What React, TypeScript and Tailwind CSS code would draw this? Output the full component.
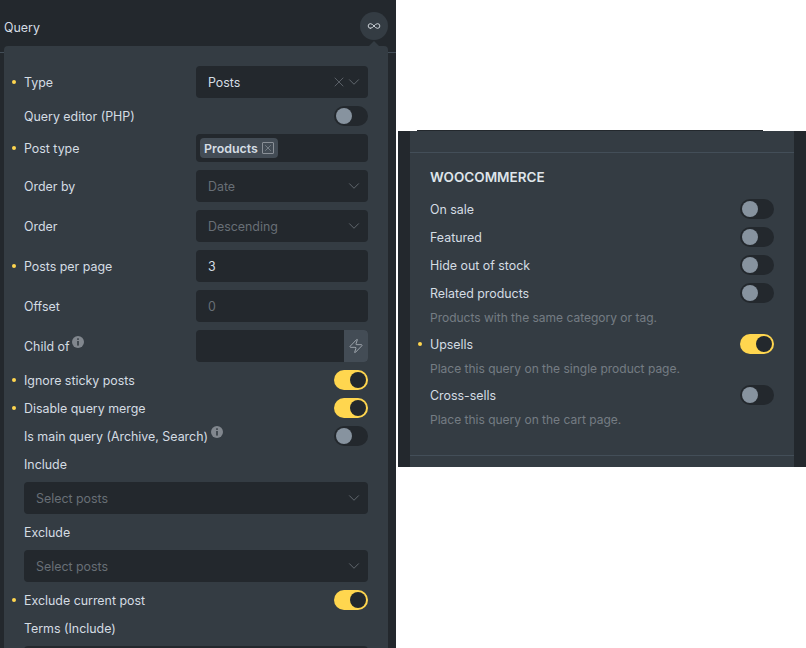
import React from 'react';
import { ChevronDown, Infinity as InfinityIcon, X, Zap } from 'lucide-react';

const Toggle = ({ on = false }: { on?: boolean }) => (
  <div className={`w-[34px] h-5 rounded-full flex items-center px-0.5 shrink-0 ${on ? 'bg-[#ffd64f] justify-end' : 'bg-[#23282d] justify-start'}`}>
    <div className={`w-4 h-4 rounded-full ${on ? 'bg-[#23282d]' : 'bg-[#87939f]'}`}></div>
  </div>
);

const Info = () => (
  <svg width="12" height="12" viewBox="0 0 12 12" className="shrink-0 mb-2.5 ml-[3px]">
    <circle cx="6" cy="6" r="6" fill="#81878e" />
    <rect x="5.2" y="2.3" width="1.6" height="1.6" fill="#343c43" />
    <rect x="5.2" y="5" width="1.6" height="4.6" fill="#343c43" />
  </svg>
);

const Row = ({ label, dot = false, info = false, children, width = 'w-[172px]' }: { label: string; dot?: boolean; info?: boolean; children?: React.ReactNode; width?: string }) => (
  <div className="flex items-center pr-5 min-h-5">
    <div className="w-5 pl-2 shrink-0">
      {dot && <div className="w-1 h-1 rounded-full bg-[#ffd64f]"></div>}
    </div>
    <div className={`${width} h-5 pt-0.5 shrink-0 flex items-center text-[12.4px] leading-5 text-[#d5dde4]`}>
      {label}
      {info && <Info />}
    </div>
    <div className="flex-1 flex justify-end">{children}</div>
  </div>
);

const Select = ({ value, muted = false, clear = false }: { value: string; muted?: boolean; clear?: boolean }) => (
  <div className={`w-full h-8 pl-3 rounded bg-[#23282d] flex items-center text-[12.4px] ${muted ? 'text-[#686f76]' : 'text-[#d5dde4]'}`}>
    <span className="flex-1 pt-0.5">{value}</span>
    {clear && <X size={16} strokeWidth={1} className="text-[#767c83] -mr-0.5" />}
    <ChevronDown size={18} strokeWidth={1} className="text-[#767c83] mr-[5px]" />
  </div>
);

const Input = ({ value, muted = false }: { value: string; muted?: boolean }) => (
  <div className={`w-full h-8 px-3 pt-0.5 rounded bg-[#23282d] flex items-center text-[12.4px] ${muted ? 'text-[#686f76]' : 'text-[#d5dde4]'}`}>
    {value}
  </div>
);

const Note = ({ text }: { text: string }) => (
  <div className="pl-5 text-xs leading-[15px] -mt-px mb-px text-[#757c83]">{text}</div>
);

const QueryPopup = () => (
  <div className="relative ml-1 w-[384px] -mt-[7px] rounded bg-[#343c43] pt-5 pb-5 flex flex-col gap-2">
    <div className="absolute -top-[5px] right-[9px] w-0 h-0 border-x-[5px] border-b-[5px] border-x-transparent border-b-[#343c43]"></div>
    <Row label="Type" dot><Select value="Posts" clear /></Row>
    <Row label="Query editor (PHP)"><Toggle /></Row>
    <Row label="Post type" dot>
      <div className="w-full h-7 px-1 rounded bg-[#23282d] flex items-center">
        <div className="h-5 px-1 pt-0.5 rounded bg-[#434c55] flex items-center gap-1 text-[12.4px] font-semibold text-[#d5dde4]">
          Products
          <div className="w-3 h-3 -mt-0.5 border border-[#8a9097] rounded-[1px] flex items-center justify-center">
            <X size={10} strokeWidth={1} className="text-[#c0c6cc]" />
          </div>
        </div>
      </div>
    </Row>
    <Row label="Order by"><Select value="Date" muted /></Row>
    <Row label="Order"><Select value="Descending" muted /></Row>
    <Row label="Posts per page" dot><Input value="3" /></Row>
    <Row label="Offset"><Input value="0" muted /></Row>
    <Row label="Child of" info>
      <div className="w-full h-8 rounded bg-[#23282d] flex justify-end">
        <div className="w-6 h-8 rounded-r bg-[#434c55] flex items-center justify-center">
          <Zap size={16} strokeWidth={1} className="text-[#c8ced4]" />
        </div>
      </div>
    </Row>
    <Row label="Ignore sticky posts" dot><Toggle on /></Row>
    <Row label="Disable query merge" dot><Toggle on /></Row>
    <Row label="Is main query (Archive, Search)" info width="w-[300px]"><Toggle /></Row>
    <Row label="Include" />
    <div className="px-5"><Select value="Select posts" muted /></div>
    <Row label="Exclude" />
    <div className="px-5"><Select value="Select posts" muted /></div>
    <Row label="Exclude current post" dot><Toggle on /></Row>
    <Row label="Terms (Include)" />
    <div className="px-5"><Select value="" muted /></div>
  </div>
);

const WooPanel = () => (
  <div className="relative w-[408px] h-[336px] mt-[131px] bg-[#23282d] px-3 shrink-0">
    <div className="absolute -top-px left-[19px] w-[346px] h-px bg-[#23282d]"></div>
    <div className="h-full bg-[#343c43] flex flex-col">
      <div className="h-[21px] shrink-0"></div>
      <div className="flex-1 border-y border-[#434e58] flex flex-col gap-2 pt-3.5">
        <div className="pl-5 text-[13.5px] leading-5 font-semibold text-[#dfe5ea] uppercase mb-1">WooCommerce</div>
        <Row label="On sale" width="w-[280px]"><Toggle /></Row>
        <Row label="Featured" width="w-[280px]"><Toggle /></Row>
        <Row label="Hide out of stock" width="w-[280px]"><Toggle /></Row>
        <Row label="Related products" width="w-[280px]"><Toggle /></Row>
        <Note text="Products with the same category or tag." />
        <Row label="Upsells" dot width="w-[280px]"><Toggle on /></Row>
        <Note text="Place this query on the single product page." />
        <Row label="Cross-sells" width="w-[280px]"><Toggle /></Row>
        <Note text="Place this query on the cart page." />
      </div>
      <div className="h-[11px] shrink-0"></div>
    </div>
  </div>
);

export default function App() {
  return (
    <div className="w-[806px] h-[648px] overflow-hidden bg-white flex gap-0.5 items-start font-['Inter',sans-serif]">
      <div className="w-[396px] h-[648px] bg-[#23282d] shrink-0 overflow-hidden">
        <div className="h-[53px] border-b border-[#434e58] flex items-start justify-between pl-1 pr-2 pt-3">
          <div className="h-7 pt-1 flex items-center text-[12.4px] text-[#d5dde4]">Query</div>
          <div className="w-7 h-7 rounded-full bg-[#343c43] flex items-center justify-center">
            <InfinityIcon size={14} strokeWidth={1.5} className="text-[#dfe5ea]" />
          </div>
        </div>
        <QueryPopup />
      </div>
      <WooPanel />
    </div>
  );
}
